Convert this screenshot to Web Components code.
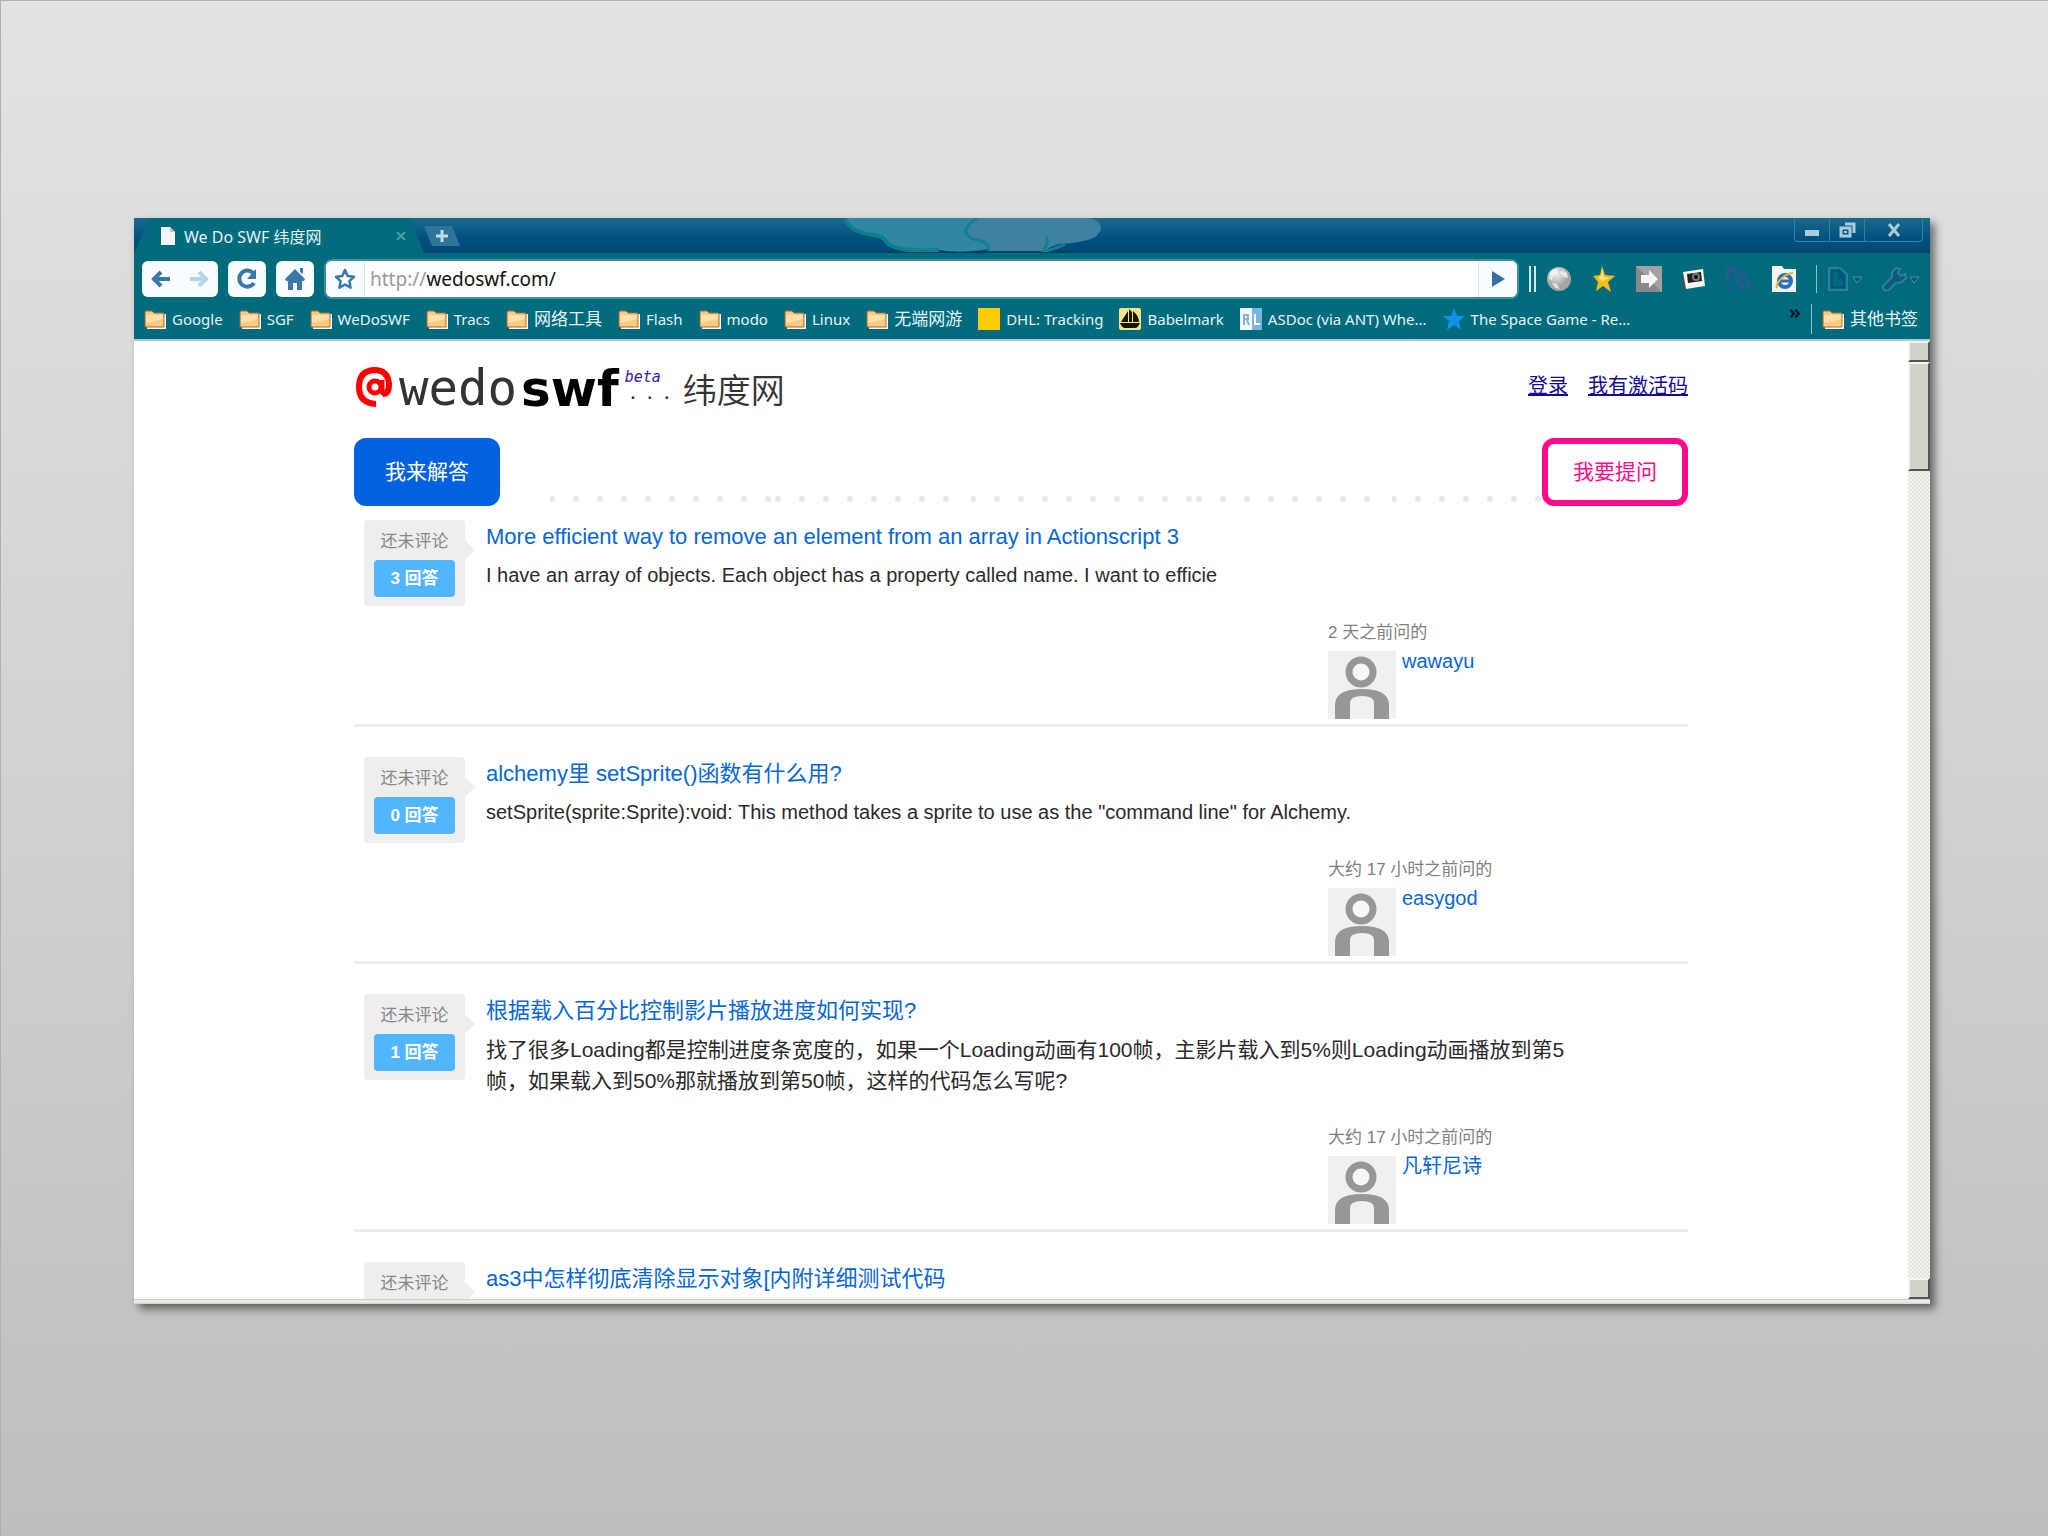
<!DOCTYPE html>
<html lang="zh-CN">
<head>
<meta charset="utf-8">
<title>We Do SWF 纬度网</title>
<style>
  * { box-sizing: border-box; }
  html, body { height: 100%; }
  body {
    margin: 0;
    padding: 218px 118px 232px 134px;
    box-shadow: inset 1px 1px #b0b0b0;
    background: linear-gradient(#e3e3e3, #d2d1d3 50%, #bfbdbf);
    font-family: "Liberation Sans", "Noto Sans CJK SC", sans-serif;
  }
</style>
</head>
<body>

<browser-window>
  <title-bar slot="chrome" label="We Do SWF 纬度网"></title-bar>
  <tool-bar slot="chrome" host="wedoswf.com/"></tool-bar>
  <bookmark-bar slot="chrome">
    <book-mark icon="folder">Google</book-mark>
    <book-mark icon="folder">SGF</book-mark>
    <book-mark icon="folder">WeDoSWF</book-mark>
    <book-mark icon="folder">Tracs</book-mark>
    <book-mark icon="folder" lang="zh">网络工具</book-mark>
    <book-mark icon="folder">Flash</book-mark>
    <book-mark icon="folder">modo</book-mark>
    <book-mark icon="folder">Linux</book-mark>
    <book-mark icon="folder" lang="zh">无端网游</book-mark>
    <book-mark icon="square">DHL: Tracking</book-mark>
    <book-mark icon="boat">Babelmark</book-mark>
    <book-mark icon="rl">ASDoc (via ANT) Whe...</book-mark>
    <book-mark icon="bluestar">The Space Game - Re...</book-mark>
    <book-mark slot="other" icon="folder" lang="zh">其他书签</book-mark>
  </bookmark-bar>

  <site-header></site-header>
  <site-actions></site-actions>
  <question-item answers="3" asked="2 天之前问的" user="wawayu">
    <span slot="title">More efficient way to remove an element from an array in Actionscript 3</span>
    I have an array of objects. Each object has a property called name. I want to efficie
  </question-item>
  <question-item answers="0" asked="大约 17 小时之前问的" user="easygod">
    <span slot="title">alchemy里 setSprite()函数有什么用?</span>
    setSprite(sprite:Sprite):void: This method takes a sprite to use as the "command line" for Alchemy.
  </question-item>
  <question-item answers="1" asked="大约 17 小时之前问的" user="凡轩尼诗" lang="zh">
    <span slot="title">根据载入百分比控制影片播放进度如何实现?</span>
    找了很多Loading都是控制进度条宽度的，如果一个Loading动画有100帧，主影片载入到5%则Loading动画播放到第5帧，如果载入到50%那就播放到第50帧，这样的代码怎么写呢?
  </question-item>
  <question-item answers="2" asked="1 天之前问的" user="wawayu" lang="zh">
    <span slot="title">as3中怎样彻底清除显示对象[内附详细测试代码</span>
  </question-item>
</browser-window>

<script>
const UI_FONT = '"Noto Sans", "Noto Sans CJK SC", sans-serif';

const ICONS = {
  page: ['0 0 16 18', '<path d="M1 0h9l5 5v13H1z" fill="#f4f6f7"/><path d="M10 0v5h5z" fill="#b9c6cb"/>'],
  close: ['0 0 10 10', '<path d="M1 1l8 8M9 1l-8 8" stroke="#4e9cab" stroke-width="2"/>'],
  plus: ['0 0 12 12', '<path d="M6 0v12M0 6h12" stroke="#c4dbe4" stroke-width="3"/>'],
  back: ['0 0 20 18', '<path d="M19 9H3M10 2L3 9l7 7" fill="none" stroke="#3a78a8" stroke-width="4"/>'],
  forward: ['0 0 20 18', '<path d="M1 9h16M10 2l7 7-7 7" fill="none" stroke="#b4d6e8" stroke-width="4"/>'],
  reload: ['0 0 22 22', '<path d="M18 15a8 8 0 1 1-1-10" fill="none" stroke="#3a78a8" stroke-width="4"/><path d="M20 1v10H11z" fill="#3a78a8"/>'],
  home: ['0 0 20 22', '<path d="M10 1l10 10-1 2h-2v9h-5v-7H8v7H3v-9H1l-1-2z" fill="#3a78a8"/><path d="M15 0h3v6l-3-2z" fill="#3a78a8"/>'],
  star: ['0 0 22 22', '<path d="M11 2l2.700 6 6.300.8-4.600 4.400 1.200 6.500L11 16.500 5.400 19.700l1.200-6.500L2 8.800 8.300 8z" fill="#fff" stroke="#3a78a8" stroke-width="2.500" stroke-linejoin="round"/>'],
  go: ['0 0 14 16', '<path d="M1 0l13 8-13 8z" fill="#3671a3"/>'],
  globe: ['0 0 24 24', '<defs><radialGradient id="g" cx=".4" cy=".3"><stop offset="0" stop-color="#f0f0f0"/><stop offset="1" stop-color="#a4a4a4"/></radialGradient></defs><circle cx="12" cy="12" r="12" fill="url(#g)"/><path d="M3 6q4-5 8-4l-1 4-4 3-1 4-3-1zM15 3l5 3 1 5-4-1-4-4zM5 16l5 1 3 5-5-1z" fill="#fafafa" opacity=".7"/>'],
  goldstar: ['0 0 22 26', '<path d="M9 0l3 9 10 1-7 6 3 10-8-6-7 5 2-9-5-6 7-1z" fill="#f8bc1c"/><path d="M9 3l2 8 6 1-8 3-4-4 3-1z" fill="#ffe774"/>'],
  send: ['0 0 26 26', '<path d="M0 0h26v26H0z" fill="#888"/><path d="M0 0h26v26z" fill="#a2a2a2"/><path d="M5 9h8V4l9 9-9 9v-5H5z" fill="#f5f5f5"/>'],
  camera: ['0 0 24 24', '<path d="M0 10l4-3v15l-3-1z" fill="#44525a"/><path d="M1 5l20-3 2 17-19 3z" fill="#f4f4f0"/><path d="M5 7l14-2 1 9-14 2z" fill="#222"/><circle cx="14" cy="10" r="4" fill="#777"/><circle cx="14" cy="10" r="2" fill="#111"/>'],
  rss: ['0 0 26 26', '<g fill="none" stroke="#255a90" stroke-width="4"><path d="M2 14V2q20 4 23 23"/><path d="M9 12q7 4 8 13"/></g><circle cx="4" cy="22" r="3" fill="#255a90"/>'],
  ie: ['0 0 26 26', '<path d="M1 0h10l2 3h12v23H1z" fill="#f5f3ec"/><circle cx="14" cy="15" r="6" fill="none" stroke="#2d6dbd" stroke-width="4"/><path d="M9 15h10" stroke="#2d6dbd" stroke-width="3"/><path d="M6 22C4 18 12 8 22 7" fill="none" stroke="#e9b52d" stroke-width="2"/>'],
  pagemenu: ['0 0 36 24', '<path d="M2 1h11l7 6v16H2z" fill="none" stroke="#2f7f99" stroke-width="2"/><path d="M5 4h7v7h5v9H5zM13 4v6h4z" fill="none" stroke="#08527c" stroke-width="2"/><path d="M26 10h9l-5 6z" fill="#08527c" stroke="#4a93a8"/>'],
  wrench: ['0 0 38 24', '<path d="M1 19l9-9V5l4-4 4 1-2 4 3 3 4-2 1 4-4 4-6 1-7 7q-6 2-6-3z" fill="#0a5a80" stroke="#2f7f99" stroke-width="2"/><path d="M28 10h9l-5 6z" fill="#08527c" stroke="#4a93a8"/>'],
  folder: ['0 0 22 19', '<path d="M3 18h18V4" fill="none" stroke="#fff" stroke-width="2"/><path d="M1 17V2q0-1 1-1h6l2 2h9q1 0 1 1v13z" fill="#ffcb80" stroke="#a66a2c" stroke-width="1"/><path d="M2 5h17v4L2 13z" fill="#ffe0ae"/>'],
  square: ['0 0 22 22', '<path d="M0 0h22v22H0z" fill="#ffcc00"/>'],
  boat: ['0 0 22 22', '<rect width="22" height="22" rx="2" fill="#f3e589"/><path d="M2 14L9 3v11zM10 1v13h3V4zM14 3q6 5 6 11h-6zM1 15h20q-2 5-5 5H6q-3 0-5-5z" fill="#181508"/>'],
  rl: ['0 0 22 22', '<path d="M0 0h22v22H0z" fill="#f2f7fb"/><path d="M12 0h10v22H12z" fill="#7cb4e0"/><path d="M4 17V7h4v4H5M7 12l2 5" fill="none" stroke="#8fb2cc" stroke-width="2"/><path d="M15 6v10h5" fill="none" stroke="#fff" stroke-width="2"/>'],
  bluestar: ['0 0 22 22', '<path d="M11 0l3 8h8l-6 5 2 9-7-5-7 5 2-9-6-5h8z" fill="#0d92e6"/>'],
  at: ['0 0 34 40', '<path d="M27 27q6 0 6-10Q32 3 18 3 3 4 3 20q0 16 17 17" fill="none" stroke="#f00" stroke-width="6"/><circle cx="19" cy="20" r="6" fill="none" stroke="#f00" stroke-width="5"/><path d="M26 13v10q0 5 4 3" fill="none" stroke="#f00" stroke-width="5"/>'],
  min: ['0 0 14 6', '<path d="M0 0h14v6H0z" fill="#a9cbdb"/>'],
  restore: ['0 0 17 16', '<path d="M6 2h9v9M2 6h9v8H2z" fill="none" stroke="#a9cbdb" stroke-width="3"/><path d="M5 9h3v2H5z" fill="#a9cbdb"/>'],
  quit: ['0 0 12 12', '<path d="M1 0l10 12M11 0L1 12" stroke="#a9cbdb" stroke-width="3"/>'],
  person: ['0 0 68 68', '<path d="M0 0h68v68H0z" fill="#f1eff1"/><circle cx="33" cy="21" r="12" fill="#f8f7f8" stroke="#989698" stroke-width="7"/><path d="M7 68V54q0-16 27-16t27 16v14H46V52q0-7-12-7t-12 7v16z" fill="#989698"/>'],
};

class UiIcon extends HTMLElement {
  constructor() {
    super();
    this.attachShadow({ mode: 'open' });
  }

  connectedCallback() {
    const [box, shapes] = ICONS[this.getAttribute('name')];
    const [, , w, h] = box.split(' ');
    this.shadowRoot.innerHTML = `
      <style>
        :host { display: inline-block; flex: none; line-height: 0; }
        svg { overflow: visible; }
      </style>
      <svg width="${w}" height="${h}" viewBox="${box}" aria-hidden="true">${shapes}</svg>
    `;
  }
}

class BrowserWindow extends HTMLElement {
  constructor() {
    super();
    this.attachShadow({ mode: 'open' });
    this.shadowRoot.innerHTML = `
      <style>
        * { box-sizing: border-box; }
        :host {
          display: flex;
          flex-direction: column;
          height: 100%;
          background: #fff;
          box-shadow: 5px 5px 8px rgba(0, 0, 0, 0.5);
        }
        .view { flex: 1; min-height: 0; display: flex; border-top: 2px solid #a9cdd2; }
        main { flex: 1; overflow: hidden; }
        .page { width: 76%; max-width: 1334px; margin: 0 auto; }
        .scroll {
          width: 22px;
          display: flex;
          flex-direction: column;
          background: repeating-conic-gradient(#e2e2de 0 25%, #f4f4f2 0 50%) 0 0 / 4px 4px;
        }
        .scroll div {
          height: 21px;
          background: #d2d2cb;
          border: 2px solid;
          border-color: #f4f4f0 #55554f #55554f #f4f4f0;
        }
        .scroll .thumb { height: 109px; margin-bottom: auto; }
        .edge { height: 5px; background: linear-gradient(#c4c4be, #f4f4f0 40%, #d2d2cb); }
      </style>
      <slot name="chrome"></slot>
      <div class="view">
        <main><div class="page"><slot></slot></div></main>
        <div class="scroll"><div></div><div class="thumb"></div><div></div></div>
      </div>
      <div class="edge"></div>
    `;
  }
}

class TitleBar extends HTMLElement {
  constructor() {
    super();
    this.attachShadow({ mode: 'open' });
  }

  connectedCallback() {
    this.shadowRoot.innerHTML = `
      <style>
        * { box-sizing: border-box; }
        :host {
          display: flex;
          position: relative;
          height: 35px;
          background: linear-gradient(#1b6a8c, #00507f 60%, #004a78 90%, #003a5e);
          font: 16px ${UI_FONT};
          color: #e6f4f6;
        }
        button { border: 0; padding: 0; background: none; display: grid; place-items: center; }
        .tab {
          width: 290px;
          padding: 1px 26px 0;
          background: #006b7c;
          clip-path: polygon(0 100%, 16px 1px, 277px 1px, 100% 100%);
          display: flex;
          align-items: center;
          gap: 8px;
        }
        .tab span { flex: 1; }
        .tab button { margin-right: -8px; }
        .new {
          width: 36px;
          height: 20px;
          margin-top: 8px;
          background: #2f749a;
          clip-path: polygon(0 0, 28px 0, 100% 100%, 8px 100%);
        }
        .cloud { position: absolute; left: 711px; top: 0; }
        .controls {
          display: flex;
          height: 24px;
          margin: 0 7px 0 auto;
          border: 1px solid #357f9f;
          border-top: 0;
          border-radius: 0 0 4px 4px;
        }
        .controls button { width: 35px; border-right: 1px solid #357f9f; }
        .controls button:first-child { padding-top: 6px; }
        .controls button:last-child { width: 57px; border: 0; }
      </style>
      <svg class="cloud" width="258" height="34" viewBox="0 0 258 34" aria-hidden="true">
        <path d="M0 0q4 14 28 17 10 0 14 8 14 10 52 7 20 4 50-1 40 4 62-5 42 0 50-14 0-9-10-12z" fill="#2f87a3"/>
        <path d="M0 0q4 14 28 17 10 0 14 8 14 10 52 7" fill="none" stroke="#08808f" stroke-width="4"/>
        <path d="M132 0q-20 14-4 21 16 2 16 12h56q6-6 20-8 34-2 34-12t-12-13z" fill="#3d82a0"/>
        <path d="M132 0q-20 14-4 21 16 2 16 12M202 18v8l-4 8q20-6 22-8" fill="none" stroke="#147e93" stroke-width="3"/>
      </svg>
      <div class="tab">
        <ui-icon name="page"></ui-icon>
        <span>${this.getAttribute('label')}</span>
        <button aria-label="关闭标签"><ui-icon name="close"></ui-icon></button>
      </div>
      <button class="new" aria-label="新标签"><ui-icon name="plus"></ui-icon></button>
      <div class="controls">
        <button aria-label="最小化"><ui-icon name="min"></ui-icon></button>
        <button aria-label="还原"><ui-icon name="restore"></ui-icon></button>
        <button aria-label="关闭"><ui-icon name="quit"></ui-icon></button>
      </div>
    `;
  }
}

class ToolBar extends HTMLElement {
  constructor() {
    super();
    this.attachShadow({ mode: 'open' });
  }

  connectedCallback() {
    const extras = ['globe', 'goldstar', 'send', 'camera', 'rss', 'ie'];
    this.shadowRoot.innerHTML = `
      <style>
        * { box-sizing: border-box; }
        :host {
          display: flex;
          align-items: center;
          gap: 10px;
          height: 52px;
          padding: 0 10px 0 8px;
          background: #006b7c;
        }
        button { border: 0; padding: 0; background: #f8fcff; display: grid; place-items: center; }
        .key { width: 38px; height: 36px; border-radius: 6px; }
        .pair { display: flex; border-radius: 6px; overflow: hidden; }
        .pair .key { border-radius: 0; }
        .omni {
          flex: 1;
          display: flex;
          height: 40px;
          border: 2px solid #3f8ea3;
          border-radius: 8px;
          background: #fff;
          overflow: hidden;
        }
        .omni button { width: 39px; border-right: 1px solid #dde6ec; }
        .omni .go { border: 0; border-left: 1px solid #dde6ec; }
        .omni label, .omni input { font: 19px/36px ${UI_FONT}; }
        .omni label { padding-left: 5px; color: #999; }
        .omni input { flex: 1; min-width: 0; border: 0; padding: 0; background: none; color: #111; }
        .grip { width: 7px; height: 26px; border: solid #d5e8ea; border-width: 0 2px; }
        .extras { display: flex; align-items: center; gap: 19px; }
        .extras button { min-width: 26px; background: none; }
        .line { width: 1px; height: 28px; margin-right: -9px; background: #8fc3cb; }
      </style>
      <div class="pair">
        <button class="key" aria-label="后退"><ui-icon name="back"></ui-icon></button>
        <button class="key" aria-label="前进"><ui-icon name="forward"></ui-icon></button>
      </div>
      <button class="key" aria-label="刷新"><ui-icon name="reload"></ui-icon></button>
      <button class="key" aria-label="主页"><ui-icon name="home"></ui-icon></button>
      <div class="omni">
        <button aria-label="收藏"><ui-icon name="star"></ui-icon></button>
        <label for="url">http://</label><input id="url" type="text" value="${this.getAttribute('host')}">
        <button class="go" aria-label="前往"><ui-icon name="go"></ui-icon></button>
      </div>
      <div class="grip"></div>
      <div class="extras">
        ${extras.map(name => `<button aria-label="${name}"><ui-icon name="${name}"></ui-icon></button>`).join('')}
        <div class="line"></div>
        <button aria-label="页面"><ui-icon name="pagemenu"></ui-icon></button>
        <button aria-label="工具"><ui-icon name="wrench"></ui-icon></button>
      </div>
    `;
  }
}

class BookmarkBar extends HTMLElement {
  constructor() {
    super();
    this.attachShadow({ mode: 'open' });
    this.shadowRoot.innerHTML = `
      <style>
        :host {
          box-sizing: border-box;
          display: flex;
          align-items: center;
          gap: 16px;
          height: 34px;
          padding: 0 12px 6px 10px;
          background: #006b7c;
          font: 15px/28px ${UI_FONT};
        }
        button {
          margin-left: auto;
          margin-right: -6px;
          border: 0;
          padding: 0 0 14px;
          background: none;
          color: #001c24;
          font: bold 20px/24px ${UI_FONT};
        }
        .line { width: 1px; height: 30px; margin-right: -6px; background: #8fc3cb; }
      </style>
      <slot></slot>
      <button aria-label="更多书签">»</button>
      <div class="line"></div>
      <slot name="other"></slot>
    `;
  }
}

class BookMark extends HTMLElement {
  constructor() {
    super();
    this.attachShadow({ mode: 'open' });
  }

  connectedCallback() {
    this.shadowRoot.innerHTML = `
      <style>
        :host { display: block; white-space: nowrap; }
        :host([lang="zh"]) { font-size: 17px; }
        a { display: flex; align-items: center; gap: 6px; color: #e6f4f6; text-decoration: none; }
      </style>
      <a href="#"><ui-icon name="${this.getAttribute('icon')}"></ui-icon><span><slot></slot></span></a>
    `;
  }
}

class SiteHeader extends HTMLElement {
  constructor() {
    super();
    this.attachShadow({ mode: 'open' });
    this.shadowRoot.innerHTML = `
      <style>
        :host { display: flex; justify-content: space-between; padding-top: 20px; height: 97px; }
        .logo { display: flex; align-items: flex-start; color: #333; line-height: 56px; }
        .logo ui-icon { margin: 6px 9px 0 2px; }
        .wedo { font-family: "DejaVu Sans Mono", monospace; font-size: 49px; }
        .swf { margin-left: 4px; font: bold 50px/56px "DejaVu Sans", sans-serif; color: #000; }
        .mark { width: 64px; padding-top: 7px; }
        .beta {
          padding-left: 6px;
          font: italic 15px/18px "DejaVu Sans Mono", monospace;
          color: #33209a;
        }
        .dots { padding-left: 10px; font: bold 14px/16px "DejaVu Sans Mono", monospace; }
        .cn { font: 350 34px/56px "Noto Sans CJK SC", sans-serif; }
        nav { display: flex; gap: 20px; padding-top: 11px; }
        nav a { color: #140a96; font-size: 20px; line-height: 28px; }
      </style>
      <div class="logo">
        <ui-icon name="at"></ui-icon>
        <span class="wedo">wedo</span><span class="swf">swf</span>
        <div class="mark"><div class="beta">beta</div><div class="dots">. . .</div></div>
        <span class="cn">纬度网</span>
      </div>
      <nav><a href="#">登录</a><a href="#">我有激活码</a></nav>
    `;
  }
}

class SiteActions extends HTMLElement {
  constructor() {
    super();
    this.attachShadow({ mode: 'open' });
    // the dotted rule is two uneven runs of dots, repeated
    const runs = [[2, 10], [228, 8]];
    const dots = runs.flatMap(([x, n]) => Array.from({ length: n }, (_, i) =>
      `<circle cx="${x + i * 24}" cy="5" r="3"/>`)).join('');
    this.shadowRoot.innerHTML = `
      <style>
        * { box-sizing: border-box; }
        :host { display: flex; align-items: flex-end; }
        button {
          width: 146px;
          height: 68px;
          padding: 0 0 4px;
          border: 6px solid #0062de;
          border-radius: 12px;
          background: #0062de;
          color: #fff;
          font: 21px "Noto Sans CJK SC", sans-serif;
        }
        .ask { background: #fff; border-color: #ff0a8c; color: #ff0a8c; }
        svg { flex: 1; min-width: 0; height: 10px; margin: 0 0 2px 50px; }
      </style>
      <button>我来解答</button>
      <svg aria-hidden="true">
        <defs><pattern id="dots" width="421" height="10" patternUnits="userSpaceOnUse" fill="#e8e8ea">${dots}</pattern></defs>
        <rect width="100%" height="10" fill="url(#dots)"/>
      </svg>
      <button class="ask">我要提问</button>
    `;
  }
}

class QuestionItem extends HTMLElement {
  constructor() {
    super();
    this.attachShadow({ mode: 'open' });
  }

  connectedCallback() {
    this.shadowRoot.innerHTML = `
      <style>
        * { box-sizing: border-box; }
        :host { display: block; padding-top: 14px; }
        article {
          display: flex;
          align-items: flex-start;
          gap: 21px;
          padding: 0 0 5px 10px;
          margin-bottom: 16px;
          border-bottom: 3px solid #ededf0;
        }
        .stats {
          position: relative;
          width: 101px;
          height: 86px;
          padding: 9px 10px;
          border-radius: 4px;
          background: #eee;
          color: #888;
          font-size: 17px;
          line-height: 26px;
          text-align: center;
        }
        .stats::after {
          content: "";
          position: absolute;
          left: 100%;
          top: 20px;
          border: 10px solid transparent;
          border-left-color: #eee;
          border-right: 0;
        }
        .stats b {
          display: block;
          margin-top: 5px;
          border-radius: 4px;
          background: #52b6ff;
          color: #fff;
          line-height: 37px;
        }
        .text { flex: 1; }
        h2 { margin: 0; font-size: 22px; font-weight: 400; line-height: 34px; }
        a { color: #0866d6; text-decoration: none; }
        p {
          margin: 6px 0 0;
          padding-right: 112px;
          min-height: 31px;
          color: #2a2a2a;
          font-size: 20px;
          line-height: 31px;
        }
        :host([lang="zh"]) p { font-size: 21px; }
        .user { width: 360px; margin: 30px 0 0 auto; color: #808080; font-size: 17px; line-height: 24px; }
        .who { display: flex; gap: 6px; margin-top: 6px; }
        .who a { font-size: 20px; line-height: 20px; }
      </style>
      <article>
        <div class="stats">还未评论<b>${this.getAttribute('answers')} 回答</b></div>
        <div class="text">
          <h2><a href="#"><slot name="title"></slot></a></h2>
          <p><slot></slot></p>
          <div class="user">${this.getAttribute('asked')}
            <div class="who"><ui-icon name="person"></ui-icon><a href="#">${this.getAttribute('user')}</a></div>
          </div>
        </div>
      </article>
    `;
  }
}

customElements.define('ui-icon', UiIcon);
customElements.define('browser-window', BrowserWindow);
customElements.define('title-bar', TitleBar);
customElements.define('tool-bar', ToolBar);
customElements.define('bookmark-bar', BookmarkBar);
customElements.define('book-mark', BookMark);
customElements.define('site-header', SiteHeader);
customElements.define('site-actions', SiteActions);
customElements.define('question-item', QuestionItem);
</script>
</body>
</html>
